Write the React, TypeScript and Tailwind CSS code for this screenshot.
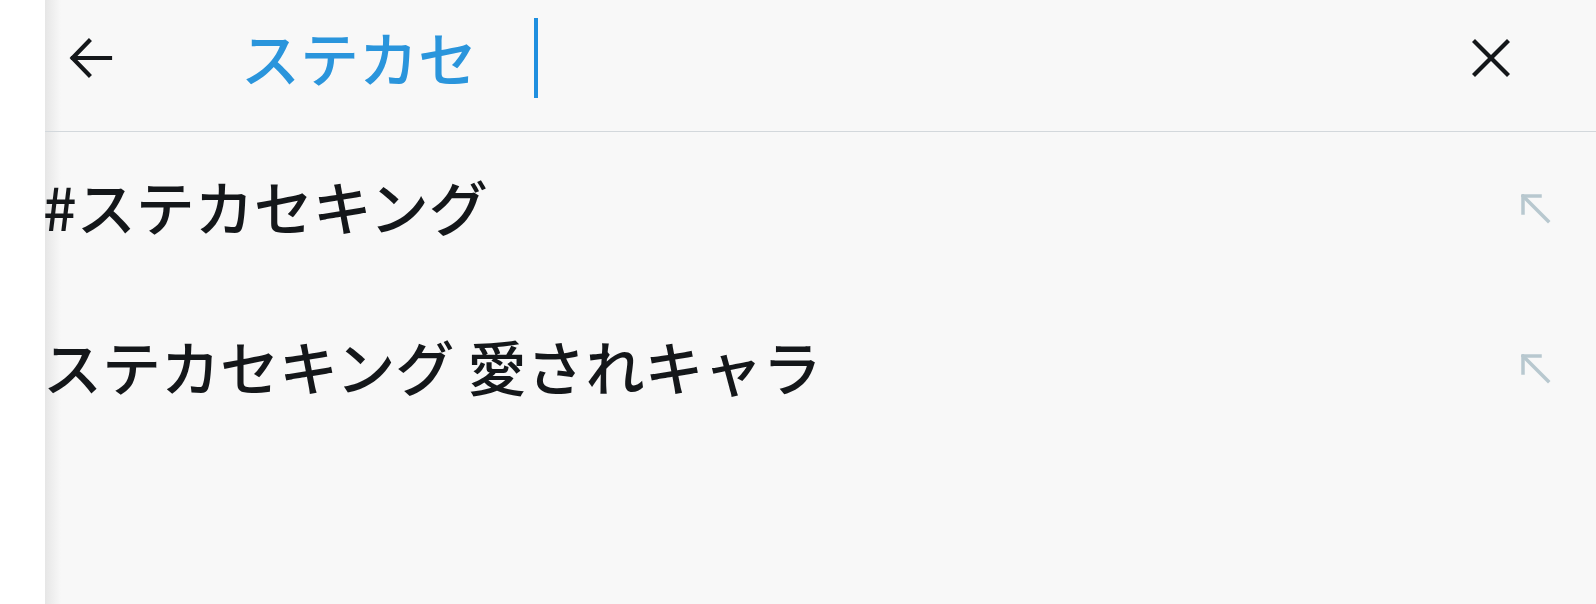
import { ReactNode } from 'react';

const suggestions = ['#ステカセキング', 'ステカセキング 愛されキャラ'];

function BackArrow() {
    return (
        <svg width="44" height="44" viewBox="0 0 44 44" fill="none" stroke="#14171a" strokeWidth="4.2" strokeLinecap="square">
            <path d="M4 22 H41" />
            <path d="M20 5 L3.5 22 L20 39" />
        </svg>
    );
}

function CloseIcon() {
    return (
        <svg width="38" height="38" viewBox="0 0 38 38" fill="none" stroke="#14171a" strokeWidth="4.2" strokeLinecap="square">
            <path d="M3 3 L35 35" />
            <path d="M35 3 L3 35" />
        </svg>
    );
}

function FillArrow() {
    return (
        <svg width="30" height="30" viewBox="0 0 30 30" fill="none" stroke="#b8c8cf" strokeWidth="3.5" strokeLinecap="square">
            <path d="M2 19 V2 H19" />
            <path d="M2 2 L27 27" />
        </svg>
    );
}

function Row({ children }: { children: ReactNode }) {
    return (
        <div className="h-[160px] flex items-center justify-between pr-[45px] pb-[6px]">
            <span className="-ml-[2px] text-[59px] leading-none pb-[7px] text-[#14171a] font-medium whitespace-pre">{children}</span>
            <FillArrow />
        </div>
    );
}

export default function App() {
    return (
        <div className="flex h-[604px] w-full bg-white overflow-hidden" style={{ fontFamily: '"Noto Sans CJK JP", "Noto Sans", sans-serif' }}>
            <div className="w-[45px] shrink-0 bg-white" />
            <div className="relative flex-1 bg-[#f8f8f8]">
                {/* inner edge shadow, sits under the content */}
                <div className="absolute inset-y-0 left-0 w-[16px] bg-gradient-to-r from-[#e6e6e6] to-transparent pointer-events-none" />

                <div className="relative flex flex-col">
                    <header className="h-[132px] shrink-0 border-b border-[#d3d8dc]">
                        <div className="h-[116px] flex items-center">
                            <div className="w-[196px] shrink-0 flex items-center pl-[24px]">
                                <BackArrow />
                            </div>
                            <div className="flex-1 flex items-center">
                                <span className="text-[59px] leading-none pb-[4px] text-[#2a95dc] font-medium">ステカセ</span>
                                <span className="ml-[57px] w-[4px] h-[80px] bg-[#1f8fdf]" />
                            </div>
                            <div className="w-[140px] shrink-0 flex items-center justify-start pl-[16px]">
                                <CloseIcon />
                            </div>
                        </div>
                    </header>

                    <div className="flex flex-col">
                        {suggestions.map(s => (
                            <Row key={s}>{s}</Row>
                        ))}
                    </div>
                </div>
            </div>
        </div>
    );
}
